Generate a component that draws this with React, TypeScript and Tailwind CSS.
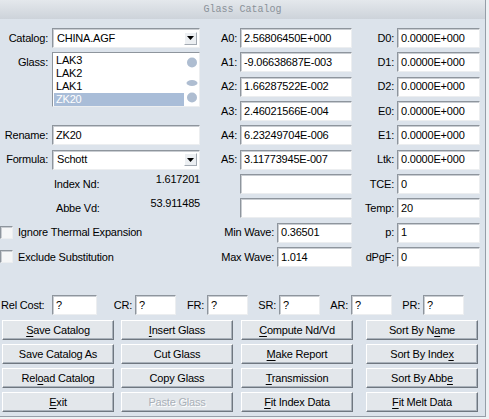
import type { ReactNode } from 'react';

const fieldBase =
  'h-[20px] bg-white border border-t-[#8e959d] border-l-[#8e959d] border-r-[#eceef0] border-b-[#eceef0] shadow-[inset_1px_1px_0_#c9cdd2] flex items-center whitespace-nowrap overflow-hidden';

function Field({ value = '', className = '' }: { value?: string; className?: string }) {
  return <div className={`${fieldBase} pl-[3px] ${className}`}>{value}</div>;
}

function Select({ value }: { value: string }) {
  return (
    <div className={`${fieldBase} justify-between pr-[2px]`}>
      <span className="pl-[4px]">{value}</span>
      <span className="w-[13px] h-[13px] bg-[#eceff2] border border-t-white border-l-white border-r-[#a3aab2] border-b-[#a3aab2] flex items-center justify-center">
        <svg width="7" height="4" viewBox="0 0 7 4">
          <path d="M0 0h7L3.5 4z" fill="#000" />
        </svg>
      </span>
    </div>
  );
}

function Label({ children, className = '' }: { children: ReactNode; className?: string }) {
  return <div className={`flex items-center justify-end pr-[3px] whitespace-nowrap ${className}`}>{children}</div>;
}

function Check({ label }: { label: string }) {
  return (
    <div className="flex items-center gap-[5px]">
      <span className="w-[13px] h-[13px] bg-[#f5f6f7] border border-t-[#8e959d] border-l-[#8e959d] border-r-[#eceef0] border-b-[#eceef0] shadow-[inset_1px_1px_0_#c9cdd2]" />
      <span>{label}</span>
    </div>
  );
}

// ul = index of the underlined access-key letter
type Btn = { label: string; ul?: number; disabled?: boolean };

function Button({ label, ul, disabled }: Btn) {
  const text =
    ul === undefined ? (
      label
    ) : (
      <>
        {label.slice(0, ul)}
        <span className="underline underline-offset-[2px]">{label[ul]}</span>
        {label.slice(ul + 1)}
      </>
    );
  return (
    <div
      className={`h-[20px] w-[112px] flex items-center justify-center bg-[#e3e7eb] border border-t-white border-l-white border-r-[#6f7780] border-b-[#6f7780] shadow-[inset_-1px_-1px_0_#aab2bb] ${
        disabled ? 'text-[#a9b0b8] [text-shadow:1px_1px_0_#fff]' : ''
      }`}
    >
      <span>{text}</span>
    </div>
  );
}

const coeffs = [
  ['A0:', '2.56806450E+000'],
  ['A1:', '-9.06638687E-003'],
  ['A2:', '1.66287522E-002'],
  ['A3:', '2.46021566E-004'],
  ['A4:', '6.23249704E-006'],
  ['A5:', '3.11773945E-007'],
];

const extras = [
  ['D0:', '0.0000E+000'],
  ['D1:', '0.0000E+000'],
  ['D2:', '0.0000E+000'],
  ['E0:', '0.0000E+000'],
  ['E1:', '0.0000E+000'],
  ['Ltk:', '0.0000E+000'],
  ['TCE:', '0'],
  ['Temp:', '20'],
  ['p:', '1'],
  ['dPgF:', '0'],
];

const rowStart = [
  'row-start-1',
  'row-start-2',
  'row-start-3',
  'row-start-4',
  'row-start-5',
  'row-start-6',
  'row-start-7',
  'row-start-8',
  'row-start-9',
  'row-start-10',
];

const buttonCols: { cls: string; items: Btn[] }[] = [
  {
    cls: '',
    items: [
      { label: 'Save Catalog', ul: 0 },
      { label: 'Save Catalog As' },
      { label: 'Reload Catalog', ul: 3 },
      { label: 'Exit', ul: 0 },
    ],
  },
  {
    cls: 'ml-[7px]',
    items: [
      { label: 'Insert Glass', ul: 0 },
      { label: 'Cut Glass' },
      { label: 'Copy Glass' },
      { label: 'Paste Glass', disabled: true },
    ],
  },
  {
    cls: 'ml-[8px]',
    items: [
      { label: 'Compute Nd/Vd', ul: 0 },
      { label: 'Make Report', ul: 0 },
      { label: 'Transmission', ul: 0 },
      { label: 'Fit Index Data', ul: 0 },
    ],
  },
  {
    cls: 'ml-[13px]',
    items: [
      { label: 'Sort By Name', ul: 9 },
      { label: 'Sort By Index', ul: 12 },
      { label: 'Sort By Abbe', ul: 11 },
      { label: 'Fit Melt Data', ul: 0 },
    ],
  },
];

const glasses = ['LAK3', 'LAK2', 'LAK1', 'ZK20'];

export default function App() {
  return (
    <div className="w-[489px] h-[419px] bg-[#eef1f4] font-['Liberation_Sans',Arial,sans-serif] text-[11px] tracking-[-0.2px] text-black">
      <div className="w-[486px] h-[417px] bg-[#dce3eb] border-r border-b border-[#959ea8] flex flex-col">
        <div className="h-[19px] bg-gradient-to-b from-[#e4e8ec] to-[#cdd3da] flex items-center justify-center font-['Liberation_Mono',monospace] text-[10px] tracking-normal text-[#8a9199]">
          Glass Catalog
        </div>

        <div className="mt-[9px] grid grid-cols-[52px_148px_40px_112px_45px_83px] grid-rows-[repeat(10,20px)] gap-y-[4.33px]">
          {/* left column */}
          <Label className="col-start-1 row-start-1 pr-[4px]">Catalog:</Label>
          <div className="col-start-2 row-start-1">
            <Select value="CHINA.AGF" />
          </div>
          <Label className="col-start-1 row-start-2 pr-[4px]">Glass:</Label>
          <div className="col-start-2 row-start-2 row-span-3 self-start h-[55px] bg-white border border-t-[#8e959d] border-l-[#8e959d] border-r-[#eceef0] border-b-[#eceef0] flex">
            <div className="flex-1 flex flex-col pt-[1px] pl-[1px]">
              {glasses.map(g => (
                <div
                  key={g}
                  className={`h-[13px] leading-[13px] pl-[2px] ${g === 'ZK20' ? 'bg-[#a9bdd8] text-white' : ''}`}
                >
                  {g}
                </div>
              ))}
            </div>
            {/* scroll track: up knob, thumb, down knob */}
            <svg width="15" height="53" viewBox="0 0 15 53" className="shrink-0">
              <circle cx="8" cy="9.5" r="5" fill="#aebdd1" />
              <ellipse cx="8" cy="30" rx="5.5" ry="3" fill="#aebdd1" />
              <circle cx="8" cy="44.5" r="5" fill="#aebdd1" />
            </svg>
          </div>
          <Label className="col-start-1 row-start-5 pr-[4px]">Rename:</Label>
          <div className="col-start-2 row-start-5">
            <Field value="ZK20" />
          </div>
          <Label className="col-start-1 row-start-6 pr-[4px]">Formula:</Label>
          <div className="col-start-2 row-start-6">
            <Select value="Schott" />
          </div>
          <div className="col-start-1 col-span-2 row-start-7 flex justify-between pl-[54px]">
            <span className="self-center">Index Nd:</span>
            <span className="self-start leading-[11px]">1.617201</span>
          </div>
          <div className="col-start-1 col-span-2 row-start-8 flex justify-between pl-[56px]">
            <span className="self-center">Abbe Vd:</span>
            <span className="self-start leading-[11px]">53.911485</span>
          </div>
          <div className="col-start-1 col-span-2 row-start-9 flex items-center">
            <Check label="Ignore Thermal Expansion" />
          </div>
          <div className="col-start-1 col-span-2 row-start-10 flex items-center">
            <Check label="Exclude Substitution" />
          </div>

          {/* middle column */}
          {coeffs.map(([l, v], i) => (
            <div key={l} className="contents">
              <Label className={`col-start-3 ${rowStart[i]}`}>{l}</Label>
              <div className={`col-start-4 ${rowStart[i]}`}>
                <Field value={v} />
              </div>
            </div>
          ))}
          <div className="col-start-4 row-start-7">
            <Field />
          </div>
          <div className="col-start-4 row-start-8">
            <Field />
          </div>
          <div className="col-start-3 col-span-2 row-start-9 flex items-center justify-end gap-[3px]">
            <span>Min Wave:</span>
            <Field value="0.36501" className="w-[75px]" />
          </div>
          <div className="col-start-3 col-span-2 row-start-10 flex items-center justify-end gap-[3px]">
            <span>Max Wave:</span>
            <Field value="1.014" className="w-[75px]" />
          </div>

          {/* right column */}
          {extras.map(([l, v], i) => (
            <div key={l} className="contents">
              <Label className={`col-start-5 ${rowStart[i]}`}>{l}</Label>
              <div className={`col-start-6 ${rowStart[i]}`}>
                <Field value={v} />
              </div>
            </div>
          ))}
        </div>

        <div className="mt-[28px] grid grid-cols-[52px_45px_38px_41px_31px_41px_31px_41px_31px_41px_31px_41px] h-[20px]">
          <div className="flex items-center pl-[1px]">Rel Cost:</div>
          <Field value="?" />
          <Label>CR:</Label>
          <Field value="?" />
          <Label>FR:</Label>
          <Field value="?" />
          <Label>SR:</Label>
          <Field value="?" />
          <Label>AR:</Label>
          <Field value="?" />
          <Label>PR:</Label>
          <Field value="?" />
        </div>

        <div className="mt-[5px] pl-[2px] flex">
          {buttonCols.map((col, i) => (
            <div key={i} className={`flex flex-col gap-[4px] ${col.cls}`}>
              {col.items.map(b => (
                <Button key={b.label} {...b} />
              ))}
            </div>
          ))}
        </div>
      </div>
    </div>
  );
}
